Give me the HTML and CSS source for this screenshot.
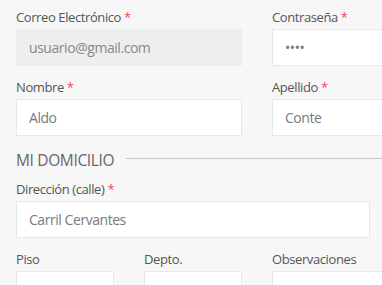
FILE: index.html
```html
<!DOCTYPE html>
<html lang="es">
<head>
<meta charset="utf-8">
<title>Mi cuenta</title>
<link rel="stylesheet" href="styles.css">
</head>
<body>
<form class="page">
  <div class="row">
    <div class="col col-6 field">
      <label>Correo Electrónico <span class="req">*</span></label>
      <input class="input" type="email" value="usuario@gmail.com" disabled>
    </div>
    <div class="col col-6 field">
      <label>Contraseña <span class="req">*</span></label>
      <input class="input" type="password" value="1234">
    </div>
  </div>
  <div class="row">
    <div class="col col-6 field">
      <label>Nombre <span class="req">*</span></label>
      <input class="input" type="text" value="Aldo">
    </div>
    <div class="col col-6 field">
      <label>Apellido <span class="req">*</span></label>
      <input class="input" type="text" value="Conte">
    </div>
  </div>
  <div class="row">
    <div class="col col-12">
      <div class="section"><span class="section-title">MI DOMICILIO</span><span class="section-line"></span></div>
    </div>
  </div>
  <div class="row">
    <div class="col col-9 field">
      <label>Dirección (calle) <span class="req">*</span></label>
      <input class="input" type="text" value="Carril Cervantes">
    </div>
  </div>
  <div class="row">
    <div class="col col-3 field">
      <label>Piso</label>
      <input class="input" type="text" value="">
    </div>
    <div class="col col-3 field">
      <label>Depto.</label>
      <input class="input" type="text" value="">
    </div>
    <div class="col col-6 field">
      <label>Observaciones</label>
      <input class="input" type="text" value="">
    </div>
  </div>
</form>
</body>
</html>
```

FILE: styles.css
```css
html, body {
  overflow: hidden;
}
body {
  margin: 0;
  background: #f7f7f7;
  font-family: "Open Sans", "Noto Sans", sans-serif;
}
.page {
  width: 512px;
  margin: 0 0 0 1px;
  padding-top: 8px;
}
.row {
  display: flex;
}
.col {
  box-sizing: border-box;
  padding: 0 15px;
}
.col-3 { width: 25%; }
.col-6 { width: 50%; }
.col-9 { width: 75%; }
.col-12 { width: 100%; }
.field {
  margin-bottom: 12px;
}
.field label {
  display: block;
  font-size: 13px;
  line-height: 18px;
  letter-spacing: -0.4px;
  color: #555;
  margin-bottom: 3px;
}
.req {
  color: #f0465a;
}
.input {
  display: block;
  box-sizing: border-box;
  width: 100%;
  height: 37px;
  margin: 0;
  padding: 0 12px;
  border: 1px solid #e8e8e8;
  border-radius: 0;
  background: #fff;
  font-family: "Open Sans", "Noto Sans", sans-serif;
  font-size: 14px;
  letter-spacing: -0.45px;
  color: #7a7a7a;
  outline: none;
}
.input:disabled {
  background: #eeeeee;
  border-color: #eeeeee;
  color: #888;
  -webkit-text-fill-color: #888;
  opacity: 1;
}
.section {
  display: flex;
  align-items: center;
  margin: 2px 0 10px;
  height: 20px;
}
.section-title {
  font-size: 15.5px;
  line-height: 20px;
  letter-spacing: -0.35px;
  color: #666;
  white-space: nowrap;
}
.section-line {
  flex: 1;
  height: 1px;
  background: #c8c8c8;
  margin: 0 0 4px 12px;
}
```
